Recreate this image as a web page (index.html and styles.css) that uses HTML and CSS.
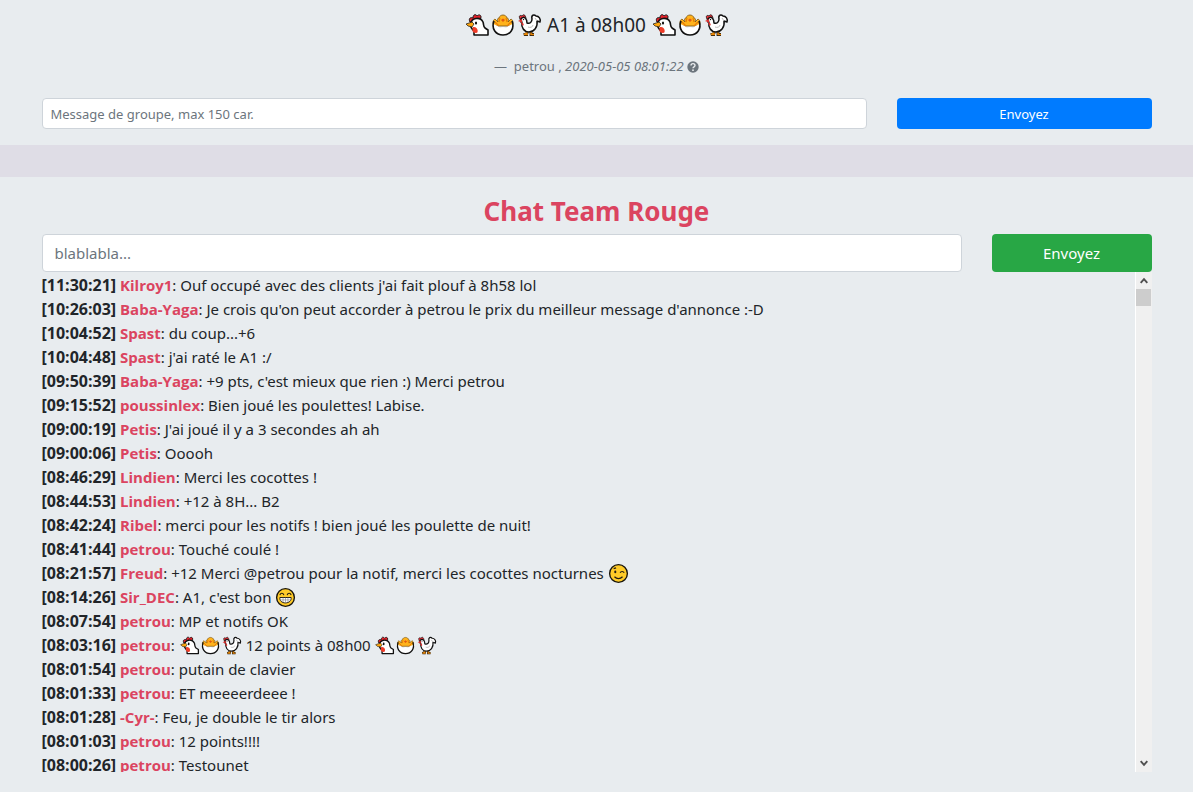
FILE: index.html
```html
<!DOCTYPE html>
<html lang="fr">
<head>
<meta charset="UTF-8">
<meta name="viewport" content="width=device-width, initial-scale=1">
<title>Chat Team Rouge</title>
<link rel="stylesheet" href="styles.css">
</head>
<body>

<!-- Icônes réutilisées dans les messages -->
<svg class="sprite" aria-hidden="true">
    <symbol id="poule" viewBox="0 0 26 26">
        <path d="M6 10C4 6 7 5 9 6c0-4 3-4 4-2 2-2 4-1 4 1l-1 4z" fill="#e8222b" stroke="#111" stroke-width="1"/>
        <path d="M7 12c0-6 9-8 12-2 1 3 0 4 2 6l3 2v5H10v-4c-2-2-4-3-3-7z" fill="#fff" stroke="#111" stroke-width="1.6" stroke-linejoin="round"/>
        <path d="M8 10l-6 2 2 2 4 1 2-3z" fill="#ffa70f" stroke="#111" stroke-width=".7"/>
        <path d="M9 15c5-1 6 6 3 6-4 0-4-3-3-6z" fill="#ef3c28"/>
        <ellipse cx="12" cy="11" rx="1.1" ry="1.6" fill="#111"/>
    </symbol>
    <symbol id="poussin" viewBox="0 0 26 26">
        <path d="M4 14C2 11 3 8 5 7l3 3c-1-3 0-4 1-4 1-4 7-4 8 0 1 0 2 1 1 4l3-3c2 1 3 4 1 7z" fill="#ffb31c" stroke="#7a5410" stroke-width=".8"/>
        <path d="M5 10l4 4m12-4l-4 4M10 6l-1 4m7-4l1 4" fill="none" stroke="#e87a05" stroke-width="1.1"/>
        <path d="M11 8l2-1.500 2 1.500-2 2z" fill="#e25b12"/>
        <path d="M3.500 12l4 2 2.500 2 3-1 3 1 2.500-2 4-2C24 18 20 23 13 23S2 18 3.500 12z" fill="#fff"/>
        <path d="M4 9c-3 8 2 14 9 14s12-6 9-14" fill="none" stroke="#111" stroke-width="1.6"/>
    </symbol>
    <symbol id="coq" viewBox="0 0 26 26">
        <path d="M11 18v3l-3 1.500h4m3-4.500v4.500h3" fill="none" stroke="#111" stroke-width="2.800"/>
        <path d="M11 18v3l-3 1.500h4m3-4.500v4.500h3" fill="none" stroke="#e88708" stroke-width="1.500"/>
        <path d="M4 7C2 3 5 3 6 4c2-3 4 0 4 3v4H5z" fill="#e9323a" stroke="#111" stroke-width=".8"/>
        <path d="M5 7c3-4 6 0 6 4 3 1 5-1 5-4-1-4 2-5 4-3 3 0 5 3 4 6l-3-1c1 6-3 11-8 11-5 0-8-5-7-9z" fill="#fff" stroke="#111" stroke-width="1.500" stroke-linejoin="round"/>
        <path d="M6 7l-4 2 4 1.500zM5 10c4 1 3 5 1 3z" fill="#dd302e"/>
        <path d="M12 15c2 1 5 0 5-2M19 6l2 3" fill="none" stroke="#bbb"/>
        <circle cx="7.500" cy="7.500" r=".7" fill="#111"/>
    </symbol>
    <symbol id="clin" viewBox="0 0 26 26">
        <circle cx="13" cy="13" r="11" fill="#ffcb28" stroke="#18150d" stroke-width="1.7"/>
        <ellipse cx="9" cy="11" rx="1.3" ry="1.8" fill="#231d13"/>
        <path d="M15 12c1-2 4-2 5 0M7 7l3-1M8 17c3 3 7 3 10 0" fill="none" stroke="#231d13" stroke-width="1.5"/>
    </symbol>
    <symbol id="sourire" viewBox="0 0 26 26">
        <circle cx="13" cy="13" r="11" fill="#ffcb28" stroke="#18150d" stroke-width="1.7"/>
        <path d="M6 10c1-3 4-3 5 0m4 0c1-3 4-3 5 0" fill="none" stroke="#231d13" stroke-width="1.4"/>
        <path d="M6 13h14c1 9-15 9-14 0z" fill="#fff" stroke="#231d13" stroke-width="1.2"/>
        <path d="M6 16h14M10 13v6m3-6v7m3-7v6" stroke="#777" stroke-width=".7"/>
    </symbol>
</svg>

<section class="container annonce">
    <blockquote>
        <p class="annonce-texte"><svg class="emoji"><use href="#poule"/></svg><svg class="emoji"><use href="#poussin"/></svg><svg class="emoji"><use href="#coq"/></svg> A1 à 08h00 <svg class="emoji"><use href="#poule"/></svg><svg class="emoji"><use href="#poussin"/></svg><svg class="emoji"><use href="#coq"/></svg></p>
        <footer>—&nbsp; petrou , <cite>2020-05-05 08:01:22</cite>
            <svg class="aide" viewBox="0 0 12 12" role="img" aria-label="Aide"><circle cx="6" cy="6" r="5.7" fill="#6c757d"/><path d="M4 4.5C4 2 8 2 8 4.5 8 6 6 5.8 6 7.3" fill="none" stroke="#e9ecef" stroke-width="1.4"/><circle cx="6" cy="9.2" r=".9" fill="#e9ecef"/></svg>
        </footer>
    </blockquote>
    <form class="ligne">
        <input class="champ champ-groupe" type="text" maxlength="150" placeholder="Message de groupe, max 150 car." aria-label="Message de groupe">
        <button class="btn btn-bleu" type="button">Envoyez</button>
    </form>
</section>

<div class="bande"></div>

<main class="container chat">
    <h1>Chat Team Rouge</h1>
    <form class="ligne">
        <input class="champ champ-chat" type="text" placeholder="blablabla..." aria-label="Message du chat">
        <button class="btn btn-vert" type="button">Envoyez</button>
    </form>
    <div class="chat-box">
        <ul class="messages">
            <li><time>[11:30:21]</time> <b>Kilroy1</b>: Ouf occupé avec des clients j'ai fait plouf à 8h58 lol</li>
            <li><time>[10:26:03]</time> <b>Baba-Yaga</b>: Je crois qu'on peut accorder à petrou le prix du meilleur message d'annonce :-D</li>
            <li><time>[10:04:52]</time> <b>Spast</b>: du coup...+6</li>
            <li><time>[10:04:48]</time> <b>Spast</b>: j'ai raté le A1 :/</li>
            <li><time>[09:50:39]</time> <b>Baba-Yaga</b>: +9 pts, c'est mieux que rien :) Merci petrou</li>
            <li><time>[09:15:52]</time> <b>poussinlex</b>: Bien joué les poulettes! Labise.</li>
            <li><time>[09:00:19]</time> <b>Petis</b>: J'ai joué il y a 3 secondes ah ah</li>
            <li><time>[09:00:06]</time> <b>Petis</b>: Ooooh</li>
            <li><time>[08:46:29]</time> <b>Lindien</b>: Merci les cocottes !</li>
            <li><time>[08:44:53]</time> <b>Lindien</b>: +12 à 8H... B2</li>
            <li><time>[08:42:24]</time> <b>Ribel</b>: merci pour les notifs ! bien joué les poulette de nuit!</li>
            <li><time>[08:41:44]</time> <b>petrou</b>: Touché coulé !</li>
            <li><time>[08:21:57]</time> <b>Freud</b>: +12 Merci @petrou pour la notif, merci les cocottes nocturnes <svg class="emoji"><use href="#clin"/></svg></li>
            <li><time>[08:14:26]</time> <b>Sir_DEC</b>: A1, c'est bon <svg class="emoji"><use href="#sourire"/></svg></li>
            <li><time>[08:07:54]</time> <b>petrou</b>: MP et notifs OK</li>
            <li><time>[08:03:16]</time> <b>petrou</b>: <svg class="emoji"><use href="#poule"/></svg><svg class="emoji"><use href="#poussin"/></svg><svg class="emoji"><use href="#coq"/></svg> 12 points à 08h00 <svg class="emoji"><use href="#poule"/></svg><svg class="emoji"><use href="#poussin"/></svg><svg class="emoji"><use href="#coq"/></svg></li>
            <li><time>[08:01:54]</time> <b>petrou</b>: putain de clavier</li>
            <li><time>[08:01:33]</time> <b>petrou</b>: ET meeeerdeee !</li>
            <li><time>[08:01:28]</time> <b>-Cyr-</b>: Feu, je double le tir alors</li>
            <li><time>[08:01:03]</time> <b>petrou</b>: 12 points!!!!</li>
            <li><time>[08:00:26]</time> <b>petrou</b>: Testounet</li>
        </ul>
        <div class="ascenseur" aria-hidden="true">
            <svg class="fleche" viewBox="0 0 17 17"><path d="M5 11l3.500-4 3.500 4" fill="none" stroke="#505050" stroke-width="2"/></svg>
            <div class="curseur"></div>
            <svg class="fleche fleche-bas" viewBox="0 0 17 17"><path d="M5 6l3.500 4 3.500-4" fill="none" stroke="#505050" stroke-width="2"/></svg>
        </div>
    </div>
</main>

</body>
</html>
```
FILE: styles.css
```css
* {
    box-sizing: border-box;
}
body {
    margin: 0;
    background-color: #e8ecef;
    color: #212529;
    font-family: "Noto Sans", "Open Sans", sans-serif;
    font-size: 15px;
    line-height: 24px;
}
.sprite {
    position: absolute;
    width: 0;
    height: 0;
}
.container {
    max-width: 1140px;
    margin: 0 auto;
    padding: 0 15px;
}
/* Annonce du groupe */
.annonce {
    padding-top: 10px;
    padding-bottom: 16px;
}
blockquote {
    margin: 0 0 22px;
    text-align: center;
}
.annonce-texte {
    margin: 0 0 16px;
    font-size: 19px;
    line-height: 30px;
}
.annonce footer {
    color: #6c757d;
    font-size: 13px;
    line-height: 20px;
}
.emoji {
    width: 21px;
    height: 21px;
    vertical-align: -5px;
}
.annonce-texte .emoji {
    width: 26px;
    height: 26px;
    vertical-align: -6px;
}
.aide {
    width: 12px;
    height: 12px;
    vertical-align: -2px;
}
/* Grille de 12 colonnes pour les formulaires */
.ligne {
    display: grid;
    grid-template-columns: repeat(12, 1fr);
    column-gap: 30px;
}
.champ,
.btn {
    min-width: 0;
    border-radius: 4px;
    font-family: inherit;
}
.champ {
    border: 1px solid #ced4da;
    background-color: #fff;
    color: #495057;
}
.champ::placeholder {
    color: #6c757d;
    opacity: 1;
}
.champ-groupe {
    grid-column: span 9;
    height: 31px;
    padding: 4px 8px;
    font-size: 13px;
}
.champ-chat {
    grid-column: span 10;
    height: 38px;
    padding: 6px 12px;
    font-size: 15px;
}
.btn {
    border: 0;
    color: #fff;
    cursor: pointer;
}
.btn-bleu {
    grid-column: span 3;
    background-color: #007bff;
    font-size: 13px;
}
.btn-vert {
    grid-column: span 2;
    background-color: #28a745;
    font-size: 15px;
}
.bande {
    height: 32px;
    background-color: #dfdde6;
}
/* Chat */
.chat {
    padding-top: 17px;
    padding-bottom: 20px;
}
h1 {
    margin: 0 0 6px;
    color: #db4460;
    font-size: 26px;
    line-height: 34px;
    text-align: center;
}
.chat-box {
    display: flex;
    height: 500px;
}
.messages {
    flex: 1;
    margin: 0;
    padding: 1px 0 0;
    overflow-y: auto;
    scrollbar-width: none;
    list-style: none;
}
.messages li {
    height: 24px;
}
.messages time,
.messages b {
    font-family: "Open Sans", sans-serif;
    font-weight: bold;
}
.messages time {
    font-size: 16px;
}
.messages b {
    color: #db4460;
}
.ascenseur {
    display: flex;
    flex-direction: column;
    width: 17px;
    border-left: 1px solid #fff;
    background-color: #f0f0f0;
}
.fleche {
    width: 16px;
    height: 17px;
}
.fleche-bas {
    margin-top: auto;
}
.curseur {
    height: 17px;
    margin-right: 1px;
    background-color: #cdcdcd;
}
```
